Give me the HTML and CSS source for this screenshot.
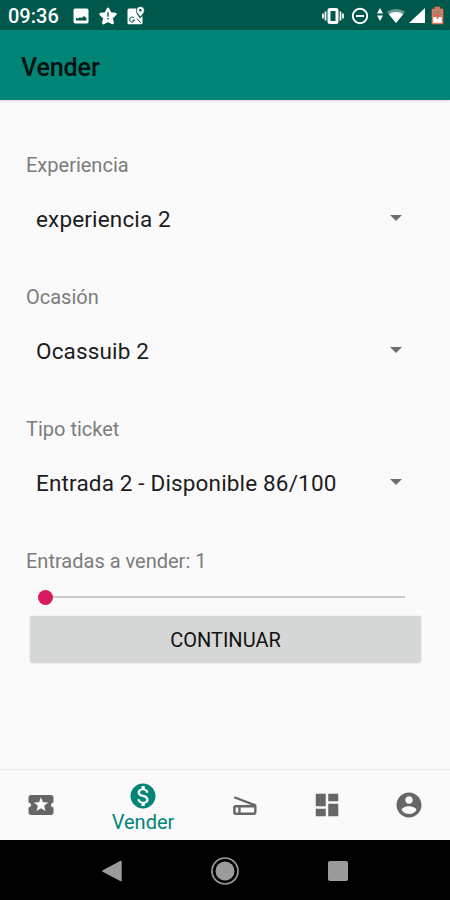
FILE: index.html
```html
<!DOCTYPE html>
<html lang="es">
<head>
    <meta charset="UTF-8">
    <meta name="viewport" content="width=device-width, initial-scale=1.0">
    <title>Vender</title>
    <link rel="stylesheet" href="styles.css">
</head>
<body>

    <div class="status-bar">
        <span class="clock">09:36</span>
        <div class="notifications">
            <svg width="20" height="20" viewBox="0 0 24 24"><path d="M21 19V5c0-1.100-.9-2-2-2H5c-1.100 0-2 .9-2 2v14c0 1.100.9 2 2 2h14c1.100 0 2-.9 2-2zM6 14l2.500 1 2-1.500 2.500 1 2.500-2.500 3 2.500v3H6z"/></svg>
            <svg width="20" height="20" viewBox="0 0 24 24"><path d="M12 3.500l2.800 5.400 6.200.8-4.700 4.500 1.300 6.300-5.600-3-5.600 3 1.300-6.300L3 9.700l6.200-.8z" stroke="#fff" stroke-width="3" stroke-linejoin="round"/><path d="M11.200 7.500h1.600v5.500h-1.600zM11.200 14.500h1.600v1.700h-1.600z" fill="#00574b"/></svg>
            <svg width="20" height="20" viewBox="0 0 24 24"><path d="M3 5c0-1.100.9-2 2-2h9v6l4 6 3-3v8c0 1.100-.9 2-2 2H5c-1.100 0-2-.9-2-2z"/><path d="M18.500 0.500c-2.700 0-4.800 2-4.800 4.700 0 3.500 4.800 8 4.800 8s4.800-4.500 4.800-8c0-2.700-2.100-4.700-4.800-4.700z" stroke="#00574b" stroke-width="1"/><circle cx="18.500" cy="5.200" r="1.500" fill="#00574b"/><path d="M11 14.500a3 3 0 1 0 .5 2.500H9M14 15l5 5" fill="none" stroke="#00574b" stroke-width="1.200"/></svg>
        </div>
        <div class="indicators">
            <svg width="22" height="20" viewBox="0 0 22 20"><path d="M1 7.500v5M3.500 5.500v9M18.500 5.500v9M21 7.500v5" fill="none" stroke="#fff" stroke-width="1.700"/><rect x="7" y="3.500" width="8" height="13" rx="1" fill="none" stroke="#fff" stroke-width="3"/></svg>
            <svg class="dnd" width="18" height="20" viewBox="0 0 18 20"><circle cx="9" cy="10" r="7.200" fill="none" stroke="#fff" stroke-width="2"/><path d="M5 9h8v2H5z"/></svg>
            <svg class="data" width="6" height="20" viewBox="0 0 6 20"><path d="M3 2l3 5.500H0zM3 15l3-5.500H0z"/></svg>
            <svg class="wifi" width="18" height="20" viewBox="0 0 18 20"><path d="M0 6c5-4 13-4 18 0l-9 11z" opacity=".4"/><path d="M1.800 8.200c4.500-3 10-3 14.400 0L9 17z"/></svg>
            <svg class="signal" width="16" height="20" viewBox="0 0 16 20"><path d="M16 2v15H0z"/></svg>
            <svg class="battery" width="13" height="20" viewBox="0 0 13 20"><path d="M4.500 1.500h4v2h3v14h-10v-14h3z" fill="#a88578" stroke="#ef7350" stroke-width="1.500"/><path d="M2.200 11h8.600v5.800H2.200z"/><path d="M6.500 6v7M4 9.500h5" stroke="#ef5b3c" stroke-width="1.700"/></svg>
        </div>
    </div>

    <header class="app-bar">
        <h1>Vender</h1>
    </header>

    <main class="sell-form">
        <div class="field">
            <label>Experiencia</label>
            <div class="spinner"><span>experiencia 2</span><i class="arrow"></i></div>
        </div>
        <div class="field">
            <label>Ocasión</label>
            <div class="spinner"><span>Ocassuib 2</span><i class="arrow"></i></div>
        </div>
        <div class="field">
            <label>Tipo ticket</label>
            <div class="spinner"><span>Entrada 2 - Disponible 86/100</span><i class="arrow"></i></div>
        </div>
        <label>Entradas a vender: 1</label>
        <div class="slider">
            <div class="thumb"></div>
            <div class="track"></div>
        </div>
        <button class="continue-btn">CONTINUAR</button>
    </main>

    <nav class="bottom-nav">
        <a class="nav-item">
            <svg width="30" height="30" viewBox="0 0 24 24"><path d="M20 12c0-1.100.9-2 2-2V6c0-1.100-.9-2-2-2H4c-1.100 0-1.990.9-1.990 2v4c1.100 0 1.990.9 1.990 2s-.89 2-2 2v4c0 1.100.9 2 2 2h16c1.100 0 2-.9 2-2v-4c-1.100 0-2-.9-2-2zm-4.420 4.800L12 14.500l-3.580 2.300 1.080-4.120-3.290-2.690 4.240-.25L12 5.800l1.540 3.950 4.240.25-3.290 2.690z"/></svg>
        </a>
        <a class="nav-item active">
            <svg width="30" height="30" viewBox="0 0 24 24"><path d="M12 2C6.480 2 2 6.480 2 12s4.480 10 10 10 10-4.480 10-10S17.520 2 12 2zm1.410 16.090V20h-2.670v-1.930c-1.710-.36-3.160-1.460-3.270-3.400h1.960c.1 1.050.82 1.870 2.650 1.870 1.960 0 2.400-.98 2.400-1.590 0-.83-.44-1.610-2.670-2.140-2.480-.6-4.180-1.620-4.180-3.670 0-1.720 1.390-2.840 3.110-3.210V4h2.670v1.950c1.860.45 2.790 1.860 2.850 3.390H14.300c-.05-1.110-.64-1.870-2.220-1.870-1.500 0-2.400.68-2.400 1.640 0 .84.65 1.390 2.670 1.910s4.180 1.390 4.180 3.910c-.01 1.830-1.380 2.830-3.120 3.160z"/></svg>
            <span>Vender</span>
        </a>
        <a class="nav-item">
            <svg width="30" height="30" viewBox="0 0 24 24"><path d="M3.400 5.800l16.400 6.300" fill="none" stroke="currentColor" stroke-width="1.900"/><path d="M19.500 10.800L17 12H4.500c-1.200 0-2 .9-2 2v4c0 1.100.8 2 2 2h14.700c1.100 0 2-.9 2-2v-5c0-1.100-.7-1.900-1.700-2.200zM6.700 18H4.500v-4h2.200zm12.600 0H8.500v-4h10.800z"/></svg>
        </a>
        <a class="nav-item">
            <svg width="30" height="30" viewBox="0 0 24 24"><path d="M3 13h8V3H3v10zm0 8h8v-6H3v6zm10 0h8V11h-8v10zm0-18v6h8V3h-8z"/></svg>
        </a>
        <a class="nav-item">
            <svg width="30" height="30" viewBox="0 0 24 24"><path d="M12 2C6.480 2 2 6.480 2 12s4.480 10 10 10 10-4.480 10-10S17.520 2 12 2zm0 3c1.660 0 3 1.340 3 3s-1.340 3-3 3-3-1.340-3-3 1.340-3 3-3zm0 14.200c-2.500 0-4.710-1.280-6-3.220.03-1.990 4-3.080 6-3.080 1.990 0 5.970 1.090 6 3.080-1.290 1.940-3.500 3.220-6 3.220z"/></svg>
        </a>
    </nav>

    <div class="system-nav">
        <svg width="30" height="30" viewBox="0 0 30 30"><path d="M24 5.500v19L6 15z" stroke="#9b9b9b" stroke-width="1.500" stroke-linejoin="round"/></svg>
        <svg width="30" height="30" viewBox="0 0 30 30"><circle cx="15" cy="15" r="13" fill="none" stroke="#9b9b9b" stroke-width="1.700"/><circle cx="15" cy="15" r="9.500"/></svg>
        <svg width="30" height="30" viewBox="0 0 30 30"><rect x="5" y="5" width="20" height="20" rx="2"/></svg>
    </div>

</body>
</html>
```
FILE: styles.css
```css
* {
    box-sizing: border-box;
}
body {
    font-family: Roboto, sans-serif;
    background-color: #fafafa;
    display: flex;
    flex-direction: column;
    height: 900px;
    margin: 0;
}
svg {
    display: block;
    fill: currentColor;
}
.status-bar {
    display: flex;
    align-items: center;
    height: 30px;
    padding: 2px 6px 0 8px;
    background-color: #00574b;
    color: #fff;
}
.clock {
    width: 63px;
    font-size: 20px;
    font-weight: 500;
}
.notifications {
    display: flex;
    gap: 7px;
}
.indicators {
    display: flex;
    margin-left: auto;
}
.dnd {
    margin-left: 7px;
}
.data {
    margin-left: 8px;
}
.wifi {
    margin-left: 4px;
}
.signal {
    margin-left: 4px;
}
.battery {
    margin-left: 6px;
}
.app-bar {
    display: flex;
    align-items: center;
    height: 70px;
    padding: 4px 21px 0;
    background-color: #008577;
    box-shadow: 0 1px 2px rgba(0, 0, 0, 0.15);
}
h1 {
    margin: 0;
    font-size: 25px;
    font-weight: 500;
    letter-spacing: -0.1px;
    color: #04110f;
}
.sell-form {
    flex: 1;
    display: flex;
    flex-direction: column;
    padding: 52px 25px 0;
}
.field {
    height: 132px;
}
label {
    display: block;
    padding-left: 1px;
    line-height: 26px;
    font-size: 20px;
    color: #7c7c7c;
}
.spinner {
    display: flex;
    justify-content: space-between;
    align-items: center;
    height: 60px;
    margin-top: 10px;
    padding: 0 23px 0 11px;
    font-size: 22.5px;
    letter-spacing: 0.16px;
    color: #1c1c1c;
}
.spinner span {
    padding-top: 2px;
}
.arrow {
    border: 6px solid transparent;
    border-top-color: #6d6d6d;
    border-bottom: 0;
}
.slider {
    display: flex;
    align-items: center;
    height: 20px;
    margin-top: 13px;
    padding: 0 20px 0 13px;
}
.thumb {
    width: 15px;
    height: 15px;
    border-radius: 50%;
    background-color: #d81b60;
}
.track {
    flex: 1;
    height: 2px;
    background-color: #cbcbcb;
}
.continue-btn {
    height: 47px;
    margin: 9px 4px 0 5px;
    border: none;
    border-radius: 2px;
    background-color: #d6d7d7;
    box-shadow: 0 0 2px rgba(0, 0, 0, 0.15);
    font-family: inherit;
    font-size: 20px;
    color: #111;
}
.bottom-nav {
    display: flex;
    height: 71px;
    border-top: 1px solid #ececec;
    color: #666;
}
.nav-item {
    display: flex;
    flex-direction: column;
    justify-content: center;
    align-items: center;
    width: 82px;
}
.active {
    width: 122px;
    padding-top: 3px;
    color: #008577;
    font-size: 20px;
    line-height: 22px;
}
.system-nav {
    display: flex;
    justify-content: center;
    align-items: center;
    gap: 83px;
    height: 60px;
    padding-top: 1px;
    background-color: #000;
    color: #9b9b9b;
}
```
